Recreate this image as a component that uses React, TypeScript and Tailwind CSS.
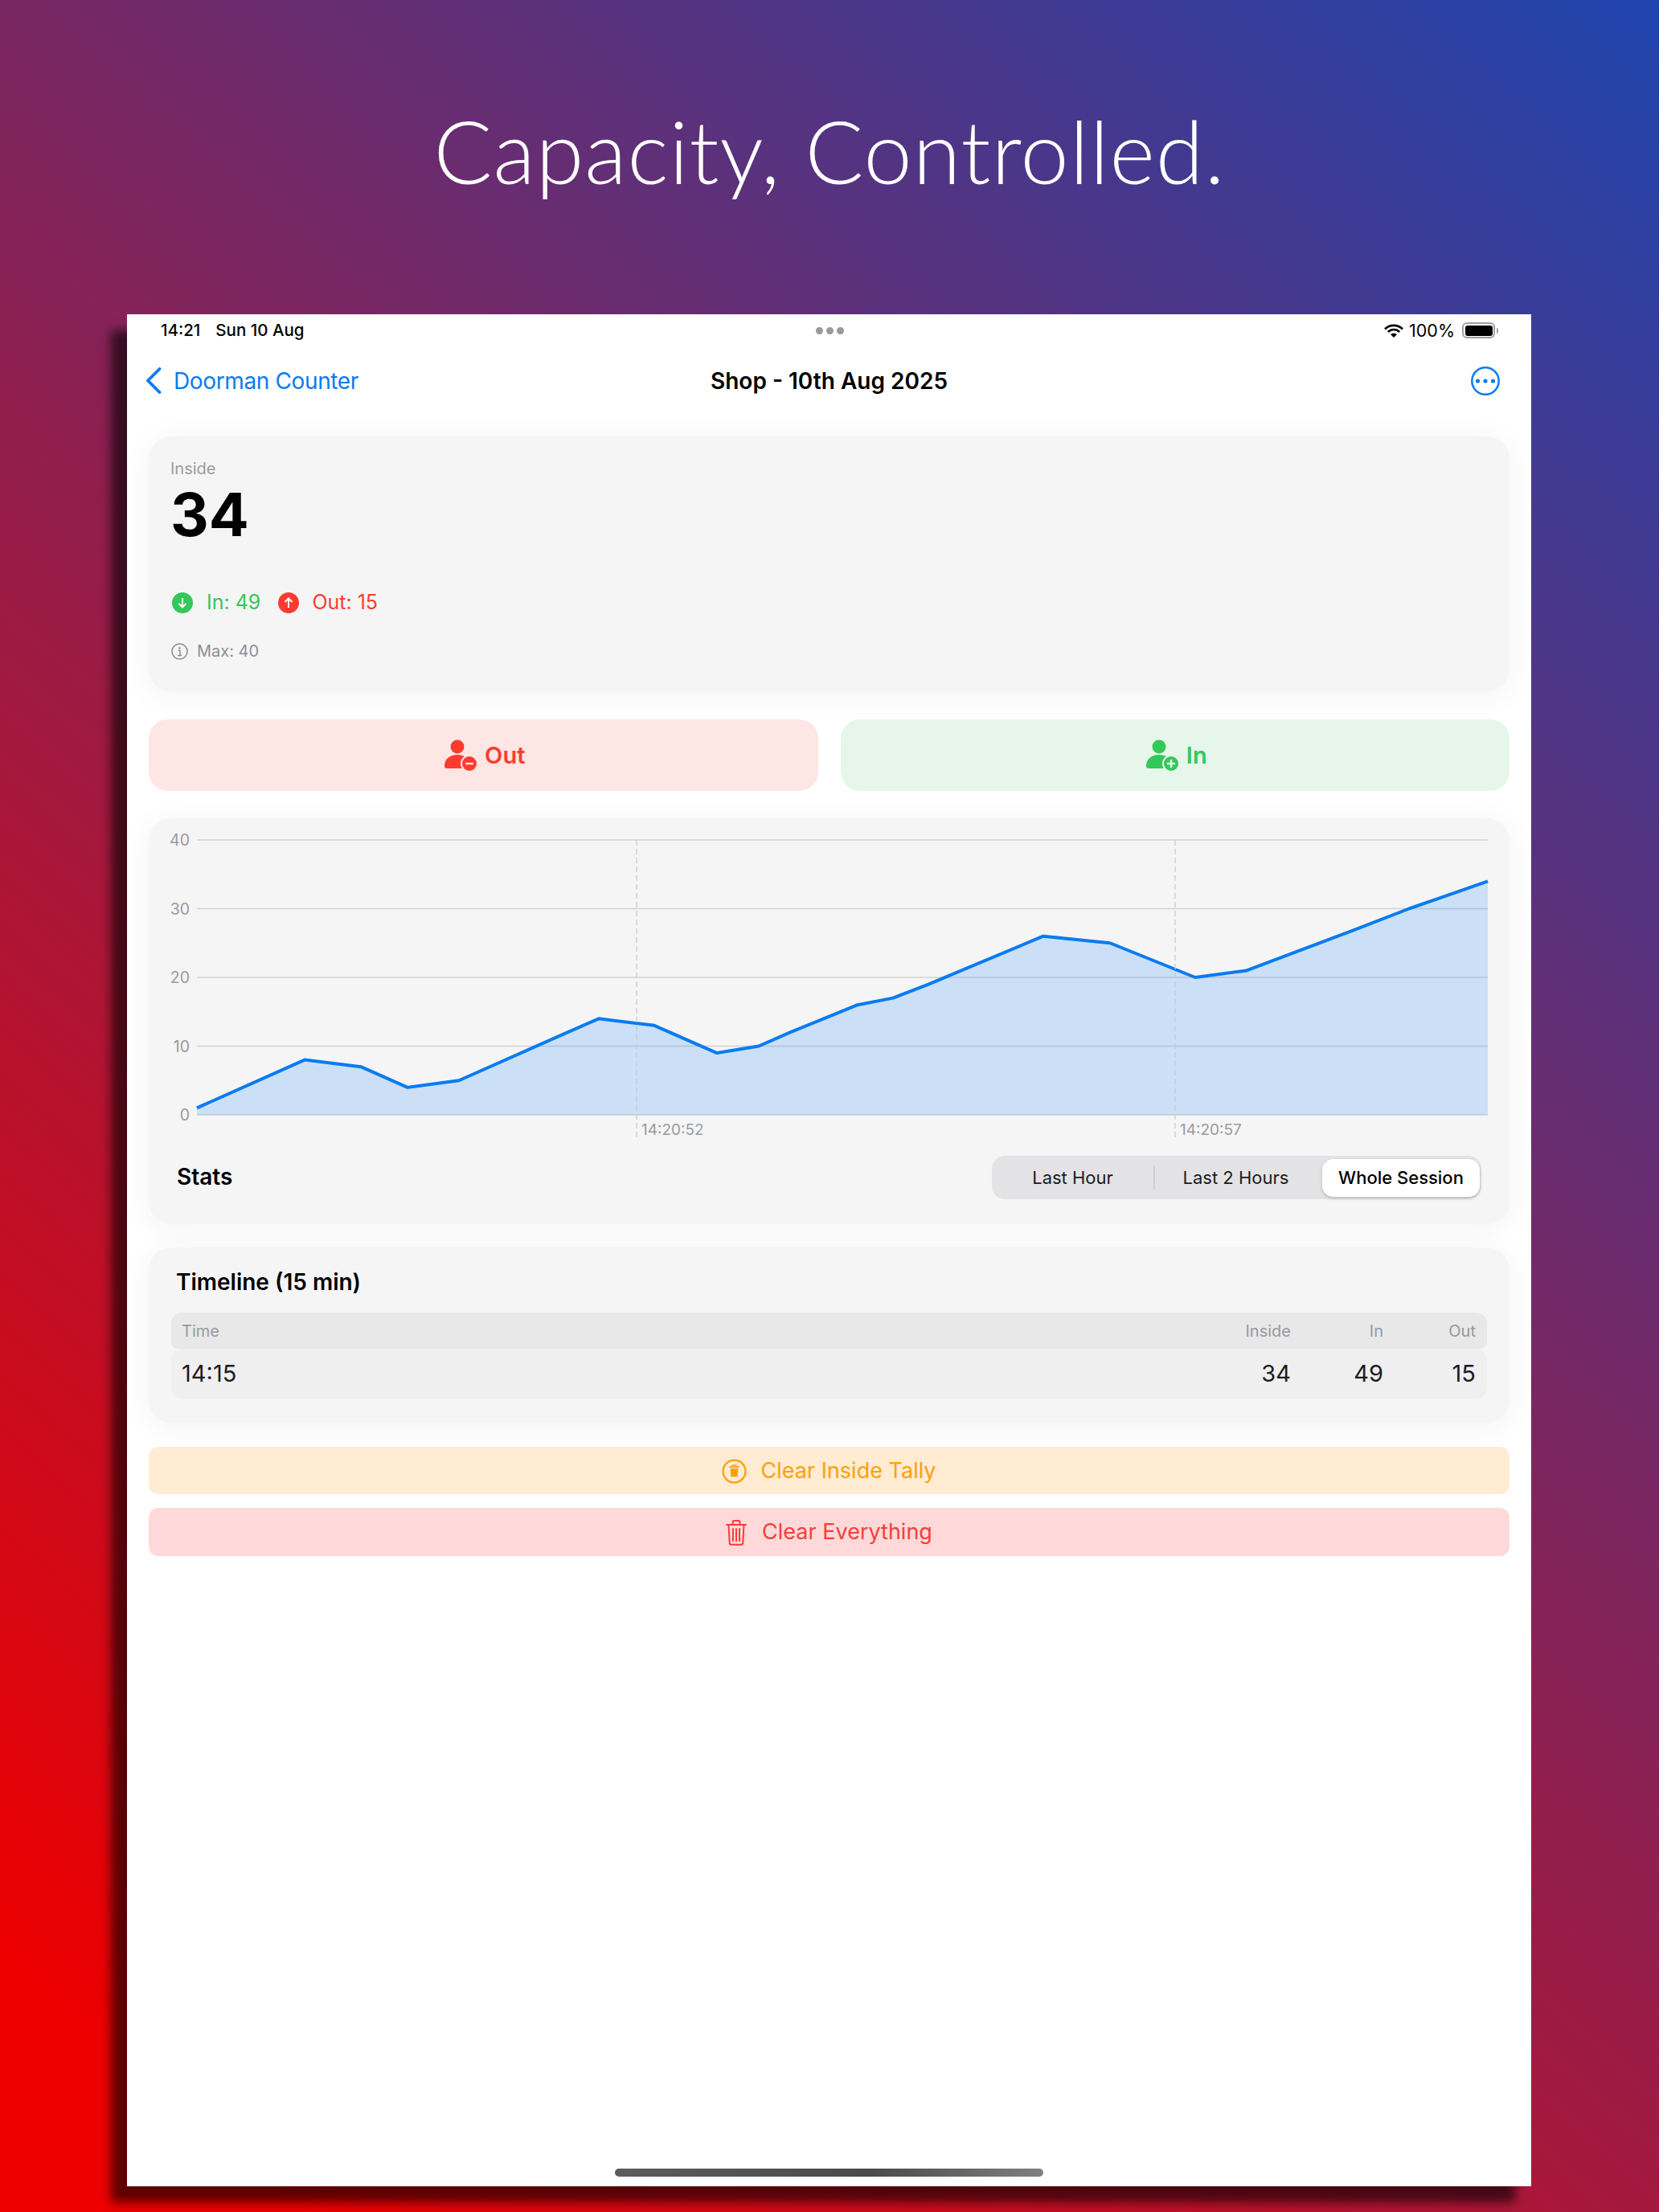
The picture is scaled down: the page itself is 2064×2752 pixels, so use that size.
const ui = { fontFamily: "Inter, 'Noto Sans', sans-serif" };

// Inside-count samples, as [x on the plot, value]
const samples: [number, number][] = [
  [59, 1], [193, 8], [263, 7], [321, 4], [385, 5], [520, 12], [559, 14], [628, 13], [706, 9], [758, 10],
  [797, 12], [881, 16], [925, 17], [969, 19], [1112, 26], [1195, 25], [1301, 20], [1365, 21], [1501, 27], [1567, 30], [1665, 34],
];
const yOf = (v: number) => 369 - v * 8.55;
const linePts = samples.map(([x, v]) => `${x},${yOf(v)}`).join(" ");
const areaPts = `59,369 ${linePts} 1665,369`;

const StatChart = () => (
  <svg width="1693" height="400" viewBox="-1 0 1693 400" className="block">
    {[40, 30, 20, 10, 0].map((v) => (
      <g key={v}>
        <line x1="59" x2="1665" y1={yOf(v)} y2={yOf(v)} stroke="#d2d2d4" strokeWidth="1.5" />
        <text x="50" y={yOf(v) + 7} textAnchor="end" fontSize="19.500" fill="#9a9a9e" style={ui}>{v}</text>
      </g>
    ))}
    <polygon points={areaPts} fill="#007aff" fillOpacity="0.17" />
    <polyline points={linePts} fill="none" stroke="#0a7bf0" strokeWidth="4" strokeLinejoin="round" />
    {[606, 1276].map((x) => (
      <line key={x} x1={x} x2={x} y1="27" y2="397" stroke="#c8c8cc" strokeWidth="1.2" strokeDasharray="7 4" />
    ))}
    <text x="612" y="394" fontSize="19" fill="#9a9a9e" style={ui}>14:20:52</text>
    <text x="1282" y="394" fontSize="19" fill="#9a9a9e" style={ui}>14:20:57</text>
  </svg>
);

const PersonBadge = ({ color, ring, plus }: { color: string; ring: string; plus?: boolean }) => (
  <svg width="41" height="40" viewBox="0 0 41 40">
    <circle cx="16" cy="9" r="8.5" fill={color} />
    <path d="M0 33c0-9 7-14 16-14s16 5 16 14c0 2-1 3-3 3H3c-2 0-3-1-3-3z" fill={color} />
    <circle cx="31" cy="30" r="11" fill={ring} />
    <circle cx="31" cy="30" r="9" fill={color} />
    <path d={plus ? "M26 30h10M31 25v10" : "M26 30h10"} stroke={ring} strokeWidth="2.4" />
  </svg>
);

const ArrowDot = ({ color, up }: { color: string; up?: boolean }) => (
  <svg width="26" height="26" viewBox="0 0 26 26">
    <circle cx="13" cy="13" r="13" fill={color} />
    <path d={up ? "M13 19V7.5M8.5 12 13 7.5l4.5 4.5" : "M13 7v11.5M8.5 14l4.5 4.5 4.5-4.5"} fill="none" stroke="#fff" strokeWidth="2" />
  </svg>
);

const Segment = ({ label, width, active }: { label: string; width: string; active?: boolean }) => (
  <div
    className={
      active
        ? `${width} h-[47px] flex items-center justify-center rounded-[14px] bg-white font-medium text-black shadow-[0_2px_4px_rgba(0,0,0,0.18)]`
        : `${width} h-[47px] flex items-center justify-center text-[#1c1c1e]`
    }
  >
    {label}
  </div>
);

export default function App() {
  return (
    <div className="w-[2064px] h-[2752px] overflow-hidden bg-[linear-gradient(42deg,#ee0000_7%,#1f45ae_100%)]">
      <div className="h-[391px] pb-[17px] flex items-center justify-center">
        <h1 className="text-white text-[108px] font-light tracking-[1px]" style={{ fontFamily: "Lato, sans-serif" }}>
          Capacity, Controlled.
        </h1>
      </div>

      <div
        className="ml-[158px] w-[1747px] h-[2329px] bg-white flex flex-col shadow-[-20px_20px_12px_rgba(0,0,0,0.6)]"
        style={ui}
      >
        {/* status bar */}
        <div className="h-[42px] pb-[2px] pl-[42px] pr-[41px] flex items-center justify-between text-[20.5px] font-medium text-black">
          <div className="flex-1 flex gap-[19px]">
            <span>14:21</span>
            <span>Sun 10 Aug</span>
          </div>
          <div className="flex gap-[4px]">
            <span className="w-[9px] h-[9px] rounded-full bg-[#9a9a9e]" />
            <span className="w-[9px] h-[9px] rounded-full bg-[#9a9a9e]" />
            <span className="w-[9px] h-[9px] rounded-full bg-[#9a9a9e]" />
          </div>
          <div className="flex-1 flex items-center justify-end gap-[7px]">
            <svg width="24" height="17" viewBox="0 0 24 17">
              <path d="M1 6.5a15.5 15.5 0 0 1 22 0M4.8 10a10 10 0 0 1 14.4 0" fill="none" stroke="#000" strokeWidth="2.6" />
              <path d="M8 13a6 6 0 0 1 8 0l-4 4z" fill="#000" />
            </svg>
            <span className="font-normal text-[21.5px]">100%</span>
            <span className="ml-[2px] w-[41px] h-[20px] rounded-[6px] border-2 border-[#a0a0a0] p-[1.5px] flex">
              <span className="flex-1 rounded-[3px] bg-black" />
            </span>
            <span className="-ml-[5px] w-[2px] h-[7px] rounded-r bg-[#a0a0a0]" />
          </div>
        </div>

        {/* nav bar */}
        <div className="h-[82px] pb-[1px] px-[23px] flex items-center justify-between">
          <div className="flex-1 flex items-center gap-[15px] text-[#0a7bf0] text-[28px] tracking-[-0.37px]">
            <svg width="20" height="33" viewBox="0 0 20 33">
              <path d="M17.500 2 3 16.500 17.500 31" fill="none" stroke="#0a7bf0" strokeWidth="3.8" strokeLinecap="round" strokeLinejoin="round" />
            </svg>
            <span>Doorman Counter</span>
          </div>
          <div className="text-[28px] font-semibold text-black">Shop - 10th Aug 2025</div>
          <div className="flex-1 flex justify-end">
            <svg className="mr-[16px]" width="36" height="36" viewBox="0 0 36 36">
              <circle cx="18" cy="18" r="16.7" fill="none" stroke="#0a7bf0" strokeWidth="2.5" />
              <circle cx="8.500" cy="18" r="2.600" fill="#0a7bf0" />
              <circle cx="18" cy="18" r="2.600" fill="#0a7bf0" />
              <circle cx="27.500" cy="18" r="2.600" fill="#0a7bf0" />
            </svg>
          </div>
        </div>

        <div className="mt-[28px] mx-[27px] flex flex-col">
          {/* inside card */}
          <div className="h-[317px] rounded-[28px] bg-[#f5f5f5] pt-[27px] pl-[27px] shadow-[0_6px_40px_rgba(0,0,0,0.05)]">
            <div className="h-[26px] leading-[26px] text-[20px] text-[#9a9a9e]">Inside</div>
            <div className="mt-[6px] h-[76px] leading-[76px] text-[74px] font-bold text-black">34</div>
            <div className="mt-[57px] ml-[2px] h-[30px] flex items-center text-[25px]">
              <ArrowDot color="#34c759" />
              <span className="ml-[17px] text-[#34c759]">In: 49</span>
              <span className="ml-[22px] flex"><ArrowDot color="#ff3b30" up /></span>
              <span className="ml-[16px] text-[#ff3b30]">Out: 15</span>
            </div>
            <div className="mt-[32px] ml-[1px] h-[26px] flex items-center gap-[11px] text-[20px] text-[#8e8e93]">
              <svg width="21" height="21" viewBox="0 0 21 21">
                <circle cx="10.5" cy="10.5" r="9.5" fill="none" stroke="#8e8e93" strokeWidth="1.6" />
                <circle cx="10.5" cy="6.2" r="1.3" fill="#8e8e93" />
                <path d="M8.5 9.3h2.4v6M8 15.4h5.2" fill="none" stroke="#8e8e93" strokeWidth="1.5" />
              </svg>
              <span>Max: 40</span>
            </div>
          </div>

          {/* out / in buttons */}
          <div className="mt-[35px] h-[89px] flex gap-[28px] text-[29px] font-semibold">
            <div className="flex-1 rounded-[24px] bg-[#fee6e4] text-[#ff3b30] flex items-center justify-center gap-[9px] pl-[4px]">
              <PersonBadge color="#ff3b30" ring="#fee6e4" />
              <span>Out</span>
            </div>
            <div className="flex-1 rounded-[24px] bg-[#e6f6ea] text-[#34c759] flex items-center justify-center gap-[9px] pl-[4px]">
              <PersonBadge color="#34c759" ring="#e6f6ea" plus />
              <span>In</span>
            </div>
          </div>

          {/* chart card */}
          <div className="mt-[34px] h-[505px] rounded-[28px] bg-[#f5f5f5] shadow-[0_6px_40px_rgba(0,0,0,0.05)]">
            <StatChart />
            <div className="mt-[20px] pl-[35px] pr-[35px] flex items-center justify-between">
              <span className="-mt-[2px] text-[28px] font-semibold text-black">Stats</span>
              <div className="w-[609px] h-[54px] rounded-[16px] bg-[#e3e3e6] flex items-center text-[22px]">
                <Segment label="Last Hour" width="w-[201px]" />
                <span className="w-[1.5px] h-[30px] bg-[#cfcfd3]" />
                <Segment label="Last 2 Hours" width="w-[202px] mr-[6.5px]" />
                <Segment label="Whole Session" width="w-[196px]" active />
              </div>
            </div>
          </div>

          {/* timeline card */}
          <div className="mt-[29px] h-[218px] rounded-[28px] bg-[#f5f5f5] pt-[25px] px-[28px] shadow-[0_6px_40px_rgba(0,0,0,0.05)]">
            <div className="pl-[6px] h-[36px] leading-[36px] text-[28px] font-semibold text-black">Timeline (15 min)</div>
            <div className="mt-[20px] h-[45px] rounded-t-[14px] rounded-b-[8px] bg-[#e8e8e9] pl-[13px] pr-[14px] flex items-center text-[20px] text-[#98989c]">
              <span className="flex-1">Time</span>
              <span className="w-[115px] text-right">Inside</span>
              <span className="w-[115px] text-right">In</span>
              <span className="w-[115px] text-right">Out</span>
            </div>
            <div className="h-[62px] rounded-[14px] bg-[#efeff0] pl-[13px] pr-[14px] flex items-center text-[29px] text-[#1c1c1e]">
              <span className="flex-1">14:15</span>
              <span className="w-[115px] text-right">34</span>
              <span className="w-[115px] text-right">49</span>
              <span className="w-[115px] text-right">15</span>
            </div>
          </div>

          {/* clear buttons */}
          <div className="mt-[30px] h-[59px] pt-[2px] rounded-[12px] bg-[#ffecd2] text-[#ff9f0a] text-[27px] flex items-center justify-center gap-[17px]">
            <svg width="31" height="31" viewBox="0 0 30 30">
              <circle cx="15" cy="15" r="13.5" fill="none" stroke="#ff9f0a" strokeWidth="2.2" />
              <path d="M12 8.500V7h6v1.500M9 9h12v1.600H9zM10.300 11.600h9.400l-.7 10H11z" fill="#ff9f0a" />
            </svg>
            <span>Clear Inside Tally</span>
          </div>
          <div className="mt-[17px] h-[60px] pt-[1px] rounded-[12px] bg-[#ffd9d9] text-[#f93b3b] text-[27px] flex items-center justify-center gap-[19px]">
            <svg width="26" height="32" viewBox="0 0 26 32">
              <path
                d="M1 6h24M8.500 6V3c0-1 .8-2 2-2h5c1.200 0 2 1 2 2v3M3.500 6l1.200 22.500c.1 1.300 1 2.300 2.300 2.300h12c1.300 0 2.200-1 2.300-2.300L22.500 6M9 11v15M13 11v15M17 11v15"
                fill="none"
                stroke="#f93b3b"
                strokeWidth="2"
                strokeLinecap="round"
              />
            </svg>
            <span>Clear Everything</span>
          </div>
        </div>

        {/* home indicator */}
        <div className="mt-auto mb-[12px] mx-auto w-[533px] h-[10px] rounded-full bg-[linear-gradient(90deg,#5c5c5c,#4a4a4a_60%,#808080)]" />
      </div>
    </div>
  );
}
